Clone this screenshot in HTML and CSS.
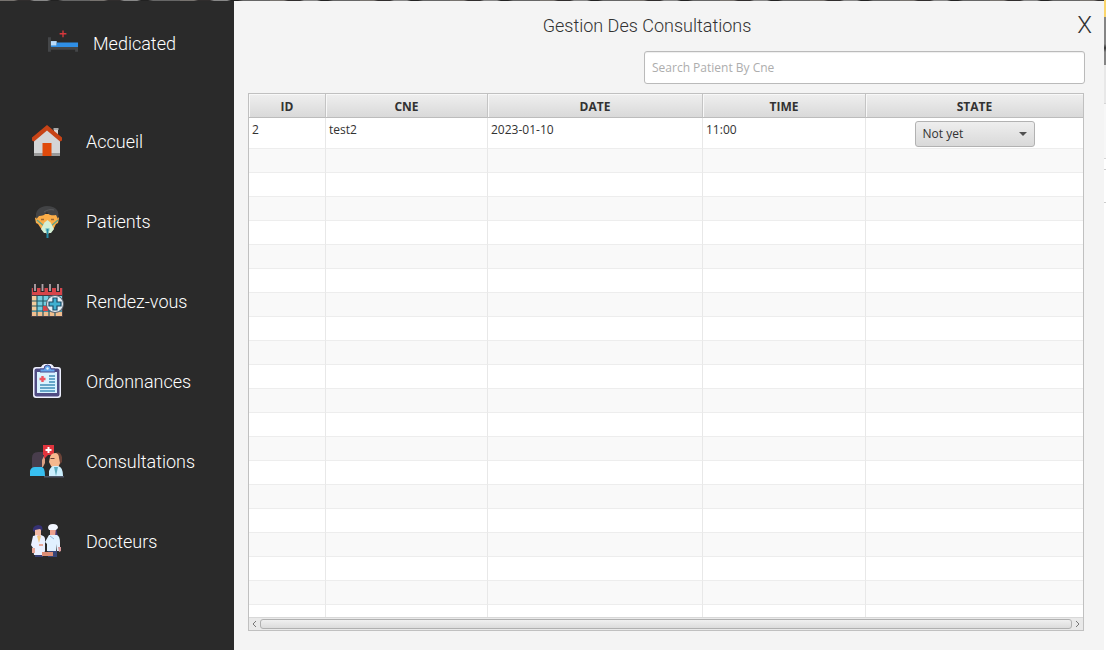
FILE: index.html
```html
<!DOCTYPE html>
<html lang="fr">
<head>
<meta charset="utf-8">
<title>Gestion Des Consultations</title>
<link rel="stylesheet" href="styles.css">
</head>
<body>
<div class="window">
  <aside class="sidebar">
    <div class="brand">
      <svg class="brand-icon" viewBox="0 0 32 32" aria-hidden="true">
        <path d="M15.500 3v7M12 6.500h7" stroke="#d8383c" stroke-width="1.400"/>
        <path d="M0 10h3v10h28v5h-3v-2H3v2H0z" fill="#444648"/>
        <path d="M3 14h6v5H3z" fill="#b9dcfb"/>
        <path d="M9 15.500h22V20H3v-1.500h6z" fill="#2f8fe6"/>
      </svg>
      <span>Medicated</span>
    </div>
    <nav class="menu">
      <a class="menu-item" href="#accueil">
        <svg class="menu-icon" viewBox="0 0 34 34" aria-hidden="true">
          <path d="M24 4h4v10h-4z" fill="#d5d5d5"/><path d="M23.500 4h5v2h-5z" fill="#aaa"/>
          <path d="M4 15L17 4l13 11v17H4z" fill="#d4d5d6"/><path d="M4 29h26v3H4z" fill="#999"/>
          <path d="M2 16.500v-3L17 1l15 12.500v3l-2 1L17 6.500 4 17.500z" fill="#c74316"/>
          <path d="M12.500 19h9v13h-9z" fill="#df4a0b"/>
        </svg>
        <span>Accueil</span>
      </a>
      <a class="menu-item" href="#patients">
        <svg class="menu-icon" viewBox="0 0 34 34" aria-hidden="true">
          <path d="M7 10h20l1 3 1 1-1 5-2 1-3 6-5.500 4.500L12 26l-4-6-2-1-1-5 2-1z" fill="#fbad48"/>
          <path d="M6.500 15C4 7 10 2 17 2c9 0 13 5 11 13l-2-4c-6 1-8-1-9-3-2 3-5 4-8 4z" fill="#424345"/>
          <path d="M14 8c3-2 6-3 10-2" stroke="#5a5b5d" fill="none"/>
          <path d="M11 15.500h3M21 15.500h3" stroke="#9a6733" stroke-width="1.500"/>
          <path d="M7 16l7 6M28 16l-7 6" stroke="#5fa58b" stroke-width="1.300"/>
          <path d="M17.500 16l3 2.500 3.500 6.500-3 4h-7l-3-4 3.500-6.500z" fill="#d4f0d6"/>
          <path d="M15.500 24h4v3h-4z" fill="#8bcfc9"/><path d="M16.500 25h2v9h-2z" fill="#238ca8"/>
        </svg>
        <span>Patients</span>
      </a>
      <a class="menu-item" href="#rendez-vous">
        <svg class="menu-icon" viewBox="0 0 34 34" aria-hidden="true">
          <path d="M1 4h32v29H1z" fill="#433b43"/>
          <path d="M2 4h30v7H2z" fill="#d6454a"/>
          <path d="M2 12h30v20H2z" fill="#75cce0"/>
          <path d="M2 12h5v15H2z" fill="#f3ca9b"/><path d="M2 28h30v4H2z" fill="#f0bd8d"/>
          <path d="M7 12v20M13 12v20M19 12v20M25 12v20M2 17h30M2 22h30M2 27h30" stroke="#245967" stroke-width="1.200"/>
          <path d="M13 22h5v5h-5z" fill="#d6454a"/>
          <path d="M5 1v7M12.500 1v7M20 1v7M28 1v7" stroke="#29272a" stroke-width="4"/>
          <path d="M5 0v7M12.500 0v7M20 0v7M28 0v7" stroke="#b3a5a9" stroke-width="1.800"/>
          <circle cx="25" cy="20" r="8.500" fill="#e5eef4" stroke="#555b67"/>
          <path d="M23 14h4v4h4v4h-4v4h-4v-4h-4v-4h4z" fill="#40afd0" stroke="#1b4965" stroke-width="1.200"/>
        </svg>
        <span>Rendez-vous</span>
      </a>
      <a class="menu-item" href="#ordonnances">
        <svg class="menu-icon" viewBox="0 0 34 34" aria-hidden="true">
          <path d="M6 3h5q2-4 7-3 4-1 6 3h4q3 0 3 3v25q0 3-3 3H6q-3 0-3-3V6q0-3 3-3z" fill="#eef0ff"/>
          <rect x="4.500" y="4.500" width="25" height="28" rx="2" fill="#504c83"/>
          <path d="M7 8h20v21H7z" fill="#d9f3ff"/>
          <path d="M10 8V5h4q0-4 3.500-4T21 5h4v3z" fill="#62a5eb" stroke="#4a4c8f"/>
          <circle cx="17.500" cy="4.500" r="1.200" fill="#e5f5ff"/>
          <path d="M12.500 12v6M9.500 15h6" stroke="#ef5662" stroke-width="2.400"/>
          <path d="M19 12h6M19 15h6M19 18h6M10 21h15M10 24h15M10 27h15" stroke="#428fb8" stroke-width="1.300"/>
        </svg>
        <span>Ordonnances</span>
      </a>
      <a class="menu-item" href="#consultations">
        <svg class="menu-icon" viewBox="0 0 34 34" aria-hidden="true">
          <path d="M9 12h6v7l-2 4H8z" fill="#dea183"/>
          <path d="M2 24V14q0-6 6-6h5l1 4-2 4v8z" fill="#483d4c"/>
          <path d="M0 32v-5q1-4 5-4h7q3 1 3 9z" fill="#38bff0"/>
          <path d="M13 1h11v10h-6l-4 4v-4h-1z" fill="#e1343d"/>
          <path d="M18.500 3v6M15.500 6h6" stroke="#fff" stroke-width="2"/>
          <path d="M24 10q6-4 8 3v5l-3 3-3 2z" fill="#6a4237"/>
          <path d="M20 13q1-4 6-4 3 1 3 5l1 5-2 5h-5l-2-2-2-4z" fill="#f5b88e"/>
          <path d="M19 32v-5q2-5 5-5h4q5 1 5 10z" fill="#ccefff"/>
          <path d="M24 23h4l-2 9z" fill="#5daabd"/><path d="M20.500 14.500h4" stroke="#683d35"/>
          <path d="M14 32h20v1.500H14z" fill="#4e5567"/>
        </svg>
        <span>Consultations</span>
      </a>
      <a class="menu-item" href="#docteurs">
        <svg class="menu-icon" viewBox="0 0 34 34" aria-hidden="true">
          <path d="M5 4h6v9H5z" fill="#f2bba6"/><path d="M3 7q-1-5 5-6 6 0 4 6l-2-2-5 1v2z" fill="#353173"/>
          <path d="M3 12l4-1 2 2 2-2q4 1 4 4v12l-2 4H4l-1-7-2-3z" fill="#eaf0ff"/>
          <path d="M7 12l2 7 2-7z" fill="#f3c57f"/><path d="M2 24h3v5H2zM9 20h4v2H9z" fill="#e8a797"/>
          <path d="M5 31h8v2H5z" fill="#373e73"/>
          <path d="M20 4h6v8h-6z" fill="#eca18e"/><path d="M26 4l2 9h-3z" fill="#403779"/>
          <path d="M18 4q0-4 5-4t5 4l-2 2h-7z" fill="#f3f7ff"/>
          <path d="M19 11h8q3 1 3 8v8h-3v-7l-1 8-9-1v-7l-2-2z" fill="#e1f1ff"/>
          <path d="M18 27h9v6h-9z" fill="#374577"/><path d="M28 23h3v4l-2 1z" fill="#d99b9c"/>
          <path d="M12 28h11v4H12z" fill="#dc8d75"/><path d="M20 12l4 3" stroke="#94b8df"/>
        </svg>
        <span>Docteurs</span>
      </a>
    </nav>
  </aside>
  <main class="content">
    <header class="topbar">
      <h1 class="title">Gestion Des Consultations</h1>
      <button class="close" type="button" aria-label="Fermer">X</button>
    </header>
    <div class="search-row">
      <input class="search" type="text" placeholder="Search Patient By Cne" aria-label="Search Patient By Cne">
    </div>
    <section class="grid">
      <div class="grid-body">
        <table class="table">
          <colgroup><col class="col-id"><col class="col-cne"><col class="col-date"><col class="col-time"><col></colgroup>
          <thead><tr><th>ID</th><th>CNE</th><th>DATE</th><th>TIME</th><th>STATE</th></tr></thead>
          <tbody>
            <tr class="filled"><td>2</td><td>test2</td><td>2023-01-10</td><td>11:00</td>
              <td class="state"><div class="combo"><select class="combo-select" aria-label="State"><option>Not yet</option></select></div></td></tr>
            <tr><td></td><td></td><td></td><td></td><td></td></tr>
            <tr><td></td><td></td><td></td><td></td><td></td></tr>
            <tr><td></td><td></td><td></td><td></td><td></td></tr>
            <tr><td></td><td></td><td></td><td></td><td></td></tr>
            <tr><td></td><td></td><td></td><td></td><td></td></tr>
            <tr><td></td><td></td><td></td><td></td><td></td></tr>
            <tr><td></td><td></td><td></td><td></td><td></td></tr>
            <tr><td></td><td></td><td></td><td></td><td></td></tr>
            <tr><td></td><td></td><td></td><td></td><td></td></tr>
            <tr><td></td><td></td><td></td><td></td><td></td></tr>
            <tr><td></td><td></td><td></td><td></td><td></td></tr>
            <tr><td></td><td></td><td></td><td></td><td></td></tr>
            <tr><td></td><td></td><td></td><td></td><td></td></tr>
            <tr><td></td><td></td><td></td><td></td><td></td></tr>
            <tr><td></td><td></td><td></td><td></td><td></td></tr>
            <tr><td></td><td></td><td></td><td></td><td></td></tr>
            <tr><td></td><td></td><td></td><td></td><td></td></tr>
            <tr><td></td><td></td><td></td><td></td><td></td></tr>
            <tr><td></td><td></td><td></td><td></td><td></td></tr>
            <tr><td></td><td></td><td></td><td></td><td></td></tr>
          </tbody>
        </table>
      </div>
      <div class="scrollbar">
        <button class="scroll-arrow" type="button" aria-label="Défiler à gauche"><svg viewBox="0 0 5 8"><path d="M4 1L1 4l3 3"/></svg></button>
        <div class="scroll-thumb"></div>
        <button class="scroll-arrow" type="button" aria-label="Défiler à droite"><svg viewBox="0 0 5 8"><path d="M1 1l3 3-3 3"/></svg></button>
      </div>
    </section>
  </main>
</div>
</body>
</html>
```
FILE: styles.css
```css
* { box-sizing: border-box; }

body {
  display: flex;
  height: 100vh;
  margin: 0;
  padding: 1px 2px 0 0;
  overflow: hidden;
  font-family: "Open Sans", "Noto Sans", sans-serif;
  font-size: 12px;
  color: #323232;
  background:
    linear-gradient(#fbd66c 0 17px, #858585 17px 44px, #333 48px, #858585 52px 65px, #e8e8e8 65px 103px, #d5d5d5 103px 104px, #f7f7f7 104px 158px, #d5d5d5 158px 159px, #fff 159px 169px, #ccc 169px 170px, #fff 170px 202px, #ccc 202px 203px, #fff 203px) right / 2px 100% no-repeat,
    repeating-linear-gradient(90deg, #77736f 0 14px, #302d2d 18px 30px, #888 34px 47px, #222 51px 58px, #666 63px 90px);
}

button, input, select { font: inherit; color: inherit; }

.window { display: flex; flex: 1; min-width: 0; }

.sidebar {
  flex: none;
  width: 234px;
  color: #fff;
  background: #2a2a2a;
  font-family: Roboto, sans-serif;
  font-size: 18px;
  font-weight: 300;
}

.brand {
  display: flex;
  align-items: center;
  gap: 14px;
  height: 84px;
  padding-left: 48px;
}

.brand-icon { width: 31px; height: 32px; }

.menu { padding-top: 16px; }

.menu-item {
  display: flex;
  align-items: center;
  gap: 22px;
  height: 80px;
  padding-left: 30px;
  color: inherit;
  text-decoration: none;
}

.menu-icon { width: 34px; height: 34px; }

.content {
  display: flex;
  flex: 1;
  flex-direction: column;
  min-width: 0;
  padding-bottom: 19px;
  background: #f4f4f4;
}

.topbar {
  display: flex;
  align-items: center;
  height: 48px;
  padding-right: 12px;
  font-family: Roboto, sans-serif;
}

.title {
  flex: 1;
  margin: 0;
  font-size: 18px;
  font-weight: 300;
  text-align: center;
}

.close {
  width: 32px;
  padding: 0;
  border: 0;
  background: none;
  font-size: 24px;
  font-weight: 300;
  line-height: 24px;
  text-align: right;
}

.search-row {
  display: flex;
  justify-content: flex-end;
  padding: 2px 19px 0 0;
}

.search {
  width: 441px;
  height: 33px;
  padding: 0 7px;
  border: 1px solid #bababa;
  border-radius: 3px;
  background: #fff;
  box-shadow: inset 0 1px 1px #eee;
}

.search::placeholder { color: #adadad; opacity: 1; }

.grid {
  display: flex;
  flex: 1;
  flex-direction: column;
  min-height: 0;
  margin: 9px 20px 0 14px;
  border: 1px solid #c0c0c0;
  background: #fff;
}

.grid-body { flex: 1; min-height: 0; overflow: hidden; }

.table {
  width: 100%;
  table-layout: fixed;
  border-spacing: 0;
}

.col-id { width: 77px; }
.col-cne { width: 162px; }
.col-date { width: 215px; }
.col-time { width: 163px; }

.table th {
  height: 24px;
  padding: 2px 0 0;
  border-right: 1px solid #c4c4c4;
  border-bottom: 1px solid #bcbcbc;
  background: linear-gradient(#efefef, #d9d9d9);
  box-shadow: inset 1px 1px #f8f8f8;
  font-weight: 700;
}

.table td {
  height: 24px;
  padding: 0 3px;
  border-right: 1px solid #e8e8e8;
  border-bottom: 1px solid #ededed;
}

.table th:last-child, .table td:last-child { border-right: 0; }
.table tbody tr:nth-child(even) { background: #f9f9f9; }

.table .filled td {
  height: 31px;
  padding-top: 3px;
  line-height: 18px;
  vertical-align: top;
}

.combo { position: relative; width: 120px; margin: 0 auto; }

.combo::after {
  position: absolute;
  top: 11px;
  right: 8px;
  border: 4px solid transparent;
  border-top-color: #505050;
  border-bottom: 0;
  content: "";
  pointer-events: none;
}

.combo-select {
  display: block;
  width: 100%;
  height: 26px;
  padding: 0 7px;
  appearance: none;
  border: 1px solid #b2b2b2;
  border-radius: 3px;
  background: linear-gradient(#eee, #d9d9d9);
}

.scrollbar {
  display: flex;
  align-items: center;
  height: 13px;
  border-top: 1px solid #d8d8d8;
  background: #e9e9e9;
}

.scroll-arrow {
  display: flex;
  align-items: center;
  justify-content: center;
  width: 11px;
  padding: 0;
  border: 0;
  background: none;
}

.scroll-arrow svg { width: 5px; height: 8px; fill: none; stroke: #777; }

.scroll-thumb {
  flex: 1;
  height: 10px;
  border: 1px solid #b0b0b0;
  border-radius: 3px;
  background: linear-gradient(#f0f0f0, #dcdcdc);
}
```
